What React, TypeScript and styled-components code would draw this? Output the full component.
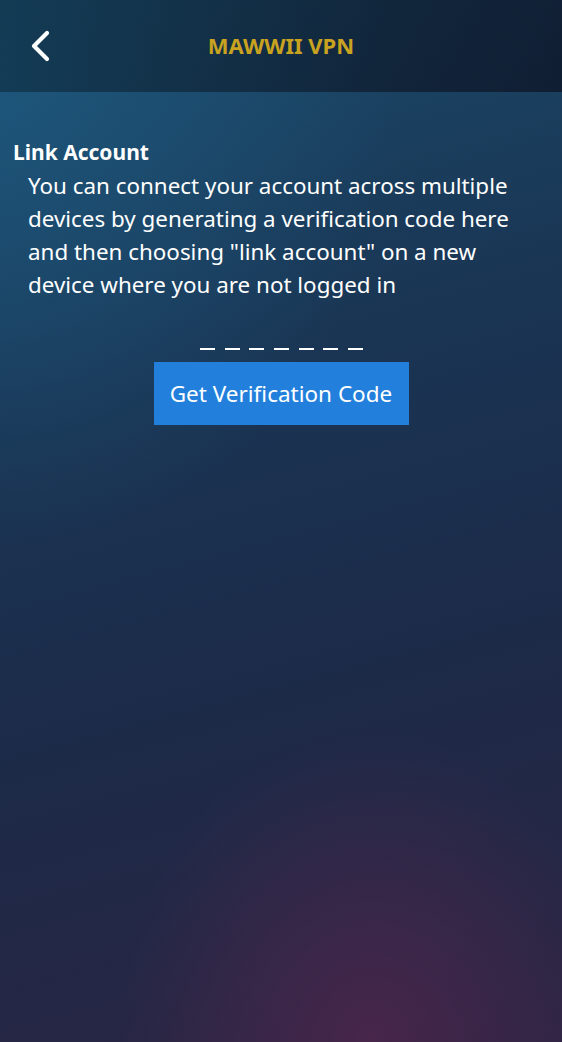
import React from 'react';
import styled, { createGlobalStyle } from 'styled-components';

const GlobalStyle = createGlobalStyle`
  html, body {
    margin: 0;
    padding: 0;
    height: 100%;
  }
  body {
    font-family: 'Noto Sans', 'Open Sans', sans-serif;
    background: #1a2e48;
  }
  #root {
    height: 100%;
  }
`;

const Page = styled.div`
  min-height: 1042px;
  display: flex;
  flex-direction: column;
  color: #fff;
  background:
    radial-gradient(ellipse 45% 30% at 66% 100%, rgba(88, 38, 78, 0.65), rgba(88, 38, 78, 0) 100%),
    radial-gradient(ellipse 70% 45% at 0% 8%, rgba(30, 95, 135, 0.6), rgba(30, 95, 135, 0) 100%),
    linear-gradient(165deg, #1b4c6c 0%, #1a3554 35%, #1c2a48 65%, #2a2543 100%);
`;

const Header = styled.header`
  height: 92px;
  display: flex;
  align-items: center;
  position: relative;
  background: linear-gradient(90deg, rgba(8, 28, 40, 0.45), rgba(10, 8, 22, 0.6));
`;

const BackButton = styled.button`
  background: none;
  border: none;
  padding: 0;
  margin-left: 28px;
  width: 26px;
  height: 34px;
  display: flex;
  align-items: center;
  cursor: pointer;
`;

const Title = styled.h1`
  flex: 1;
  margin: 0 0 0 -54px;
  text-align: center;
  font-size: 22px;
  font-weight: 700;
  color: #c9a320;
  padding-bottom: 2px;
`;

const Content = styled.main`
  padding: 46px 13px 0;
  display: flex;
  flex-direction: column;
`;

const Heading = styled.h2`
  margin: 0;
  font-size: 21px;
  font-weight: 700;
  line-height: 28px;
`;

const Description = styled.p`
  margin: 3px 28px 0 15px;
  font-size: 22.4px;
  line-height: 33px;
  font-weight: 400;
`;

const CodeArea = styled.div`
  margin-top: 35px;
  display: flex;
  flex-direction: column;
  align-items: center;
`;

const Dashes = styled.div`
  display: flex;
  gap: 9.6px;
  height: 14px;
  align-items: flex-end;
  margin-left: 1px;
`;

const Dash = styled.span`
  width: 15px;
  height: 2px;
  background: #fff;
`;

const VerifyButton = styled.button`
  margin-top: 12px;
  width: 255px;
  height: 63px;
  border: none;
  border-radius: 0;
  background: #2280dc;
  color: #fff;
  font-family: 'Noto Sans', 'Open Sans', sans-serif;
  font-size: 22.5px;
  cursor: pointer;
`;

export default function App() {
  return (
    <>
      <GlobalStyle />
      <Page>
        <Header>
          <BackButton aria-label="Back">
            <svg width="24" height="34" viewBox="0 0 24 34" fill="none">
              <path
                d="M19 4 L6 17 L19 30"
                stroke="#fff"
                strokeWidth="4.2"
                strokeLinecap="round"
                strokeLinejoin="round"
              />
            </svg>
          </BackButton>
          <Title>MAWWII VPN</Title>
        </Header>
        <Content>
          <Heading>Link Account</Heading>
          <Description>
            You can connect your account across multiple devices by generating a
            verification code here and then choosing "link account" on a new device
            where you are not logged in
          </Description>
          <CodeArea>
            <Dashes>
              {Array.from({ length: 7 }).map((_, i) => (
                <Dash key={i} />
              ))}
            </Dashes>
            <VerifyButton>Get Verification Code</VerifyButton>
          </CodeArea>
        </Content>
      </Page>
    </>
  );
}
